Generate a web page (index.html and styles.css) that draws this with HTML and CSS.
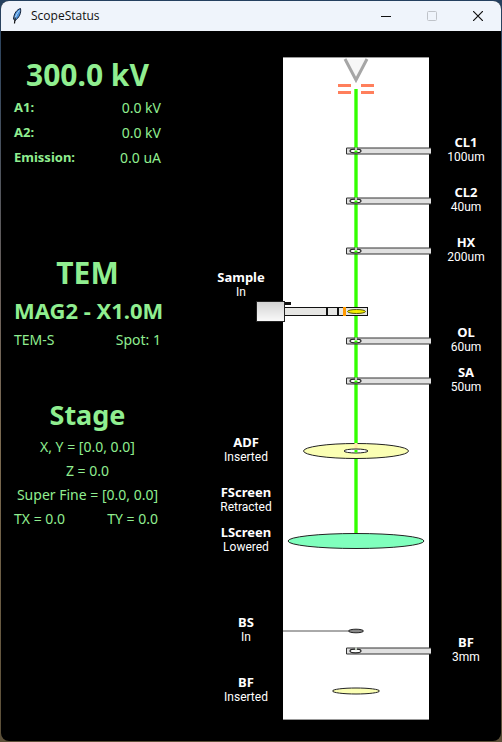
FILE: index.html
```html
<!DOCTYPE html>
<html lang="en">
<head>
<meta charset="utf-8">
<title>ScopeStatus</title>
<link rel="stylesheet" href="styles.css">
</head>
<body>
<div class="window">
  <header class="titlebar">
    <svg class="app-icon" width="10" height="16" viewBox="0 0 10 16" aria-hidden="true">
      <path d="M8.500 .5C5 1.500 2 5 1.500 11L3 12.500C7 10 9.500 5 8.500 .5Z" fill="#4a90d9" stroke="#16233a"/>
      <path d="M7.500 2.500C5 5 3.500 8.500 2.700 11.500" fill="none" stroke="#b9dcfa"/>
      <path d="M3.200 9.500L2.500 15.500" stroke="#111" stroke-width="1.200"/>
    </svg>
    <h1 class="app-name">ScopeStatus</h1>
    <div class="controls">
      <button class="control" type="button" aria-label="Minimize"><svg width="10" height="10" viewBox="0 0 10 10"><path d="M0 5.500H10" stroke="#111"/></svg></button>
      <button class="control" type="button" aria-label="Maximize" disabled><svg width="10" height="10" viewBox="0 0 10 10"><rect x=".5" y=".5" width="9" height="9" rx="1" fill="none" stroke="#bfc3c9"/></svg></button>
      <button class="control" type="button" aria-label="Close"><svg width="10" height="10" viewBox="0 0 10 10"><path d="M0 0L10 10M10 0L0 10" stroke="#111" stroke-width="1.200"/></svg></button>
    </div>
  </header>
  <main class="content">
    <div class="readings">
      <section class="group">
        <h2 class="headline">300.0 kV</h2>
        <dl class="values">
          <div class="value-row"><dt>A1:</dt><dd>0.0 kV</dd></div>
          <div class="value-row"><dt>A2:</dt><dd>0.0 kV</dd></div>
          <div class="value-row"><dt>Emission:</dt><dd>0.0 uA</dd></div>
        </dl>
      </section>
      <section class="group group-mode">
        <h2 class="headline">TEM</h2>
        <p class="magnification">MAG2 - X1.0M</p>
        <div class="pair"><span>TEM-S</span><span>Spot: 1</span></div>
      </section>
      <section class="group group-stage">
        <h2 class="headline headline-stage">Stage</h2>
        <p class="line">X, Y = [0.0, 0.0]</p>
        <p class="line">Z = 0.0</p>
        <p class="line">Super Fine = [0.0, 0.0]</p>
        <div class="line pair pair-tilt"><span>TX = 0.0</span><span>TY = 0.0</span></div>
      </section>
    </div>
    <ul class="labels labels-left">
      <li class="label label-sample"><b>Sample</b><span>In</span></li>
      <li class="label label-adf"><b>ADF</b><span>Inserted</span></li>
      <li class="label gap-20"><b>FScreen</b><span>Retracted</span></li>
      <li class="label gap-10"><b>LScreen</b><span>Lowered</span></li>
      <li class="label gap-60"><b>BS</b><span>In</span></li>
      <li class="label gap-30"><b>BF</b><span>Inserted</span></li>
    </ul>
    <svg class="column" width="148" height="663" viewBox="283 57 148 663" role="img" aria-label="Microscope column">
      <defs>
        <linearGradient id="holder" x1="0" y1="0" x2="0" y2="1"><stop offset="0" stop-color="#d2d2d2"/><stop offset="1" stop-color="#fafafa"/></linearGradient>
        <g id="aperture">
          <path d="M431 -3H346.500V3H431" fill="#e0e0e0" stroke="#333"/>
          <ellipse cx="355.500" cy="0" rx="5.500" ry="1.800" fill="#fff" stroke="#222" stroke-width="1.200"/>
          <path d="M356 -3.500V-.5" stroke="#e6f5e0" stroke-width="1.500"/>
        </g>
      </defs>
      <rect x="283" y="57" width="146" height="663" fill="#fff"/>
      <path d="M283 57.500H429M283 719.500H429" stroke="#999"/>
      <path d="M345 59L356 80L367 59" fill="#f7f7f7" stroke="#a6a6a6" stroke-width="3"/>
      <path d="M338 85.500H351M361 85.500H374M338 92.500H351M361 92.500H374" stroke="#ff7f5c" stroke-width="3"/>
      <path d="M356 89V534" stroke="#b4ff9c" stroke-width="4"/>
      <path d="M356 89V534" stroke="#3f0" stroke-width="3"/>
      <use href="#aperture" y="151"/><use href="#aperture" y="201"/><use href="#aperture" y="251"/>
      <use href="#aperture" y="341"/><use href="#aperture" y="381"/><use href="#aperture" y="651"/>
      <path d="M356 150.500V152.500M356 200.500V202.500M356 250.500V252.500M356 340.500V342.500M356 380.500V382.500" stroke="#3f0" stroke-width="3"/>
      <rect x="284.500" y="307.500" width="83" height="8" fill="#e6e6e4" stroke="#111"/>
      <path d="M327 307V316M338 307V316" stroke="#111" stroke-width="2"/>
      <path d="M344.500 307V316" stroke="#ff9900" stroke-width="3"/>
      <ellipse cx="356.500" cy="311.500" rx="9" ry="2" fill="#f4ee00" stroke="#55550a"/>
      <path d="M284 303.500H291" stroke="#111" stroke-width="3"/>
      <rect x="256.500" y="301.500" width="28" height="20" fill="url(#holder)" stroke="#222"/>
      <ellipse cx="356" cy="451" rx="52.500" ry="7.500" fill="#fbffb4" stroke="#222"/>
      <path d="M356 443V449" stroke="#ffe9a8" stroke-width="3"/>
      <ellipse cx="356" cy="451" rx="12" ry="2" fill="#fff" stroke="#222"/>
      <path d="M356 450V452.500" stroke="#3f0" stroke-width="3"/>
      <ellipse cx="356" cy="541" rx="68" ry="7.500" fill="#80ffbd" stroke="#222"/>
      <path d="M283 631H349" stroke="#555"/>
      <ellipse cx="356" cy="631" rx="7.500" ry="1.800" fill="#888" stroke="#222"/>
      <ellipse cx="356" cy="691" rx="23.500" ry="3" fill="#fbffb4" stroke="#222"/>
    </svg>
    <ul class="labels labels-right">
      <li class="label"><b>CL1</b><span>100um</span></li>
      <li class="label gap-20"><b>CL2</b><span>40um</span></li>
      <li class="label gap-20"><b>HX</b><span>200um</span></li>
      <li class="label gap-60"><b>OL</b><span>60um</span></li>
      <li class="label gap-10"><b>SA</b><span>50um</span></li>
      <li class="label label-bf"><b>BF</b><span>3mm</span></li>
    </ul>
  </main>
</div>
</body>
</html>
```
FILE: styles.css
```css
* {
  box-sizing: border-box;
  margin: 0;
  padding: 0;
}

body {
  display: flex;
  min-height: 100vh;
  padding: 1px;
  background: linear-gradient(#24405f, #6d625c 40%, #7b6a50 60%, #5b4f38);
  font-family: "Comic Sans MS", "Noto Sans", sans-serif;
  font-size: 14px;
}

.window {
  flex: 1;
  border-radius: 8px;
  overflow: hidden;
  background: #000;
}

.titlebar {
  display: flex;
  align-items: center;
  height: 30px;
  padding-left: 11px;
  background: #eff4fb;
  color: #111;
}

.app-name {
  flex: 1;
  margin-left: 9px;
  font: 12px/16px "Segoe UI", "Open Sans", sans-serif;
}

.controls {
  display: flex;
}

.control {
  display: flex;
  align-items: center;
  justify-content: center;
  width: 46px;
  height: 30px;
  border: 0;
  background: none;
}

.content {
  display: grid;
  grid-template-columns: 147px 1fr 148px 70px;
  padding: 26px 0 20px 13px;
}

.readings {
  color: #90ee90;
}

.group-mode {
  margin-top: 85px;
}

.group-stage {
  margin-top: 46px;
}

.headline {
  font-size: 30px;
  line-height: 36px;
  text-align: center;
  white-space: nowrap;
}

.headline-stage {
  margin-bottom: 2px;
  font-size: 27px;
}

.values {
  padding-top: 2px;
}

.value-row,
.pair {
  display: flex;
  justify-content: space-between;
}

.value-row {
  line-height: 25px;
}

.value-row dt {
  font-size: 13px;
  font-weight: bold;
}

.magnification {
  font-size: 22px;
  font-weight: bold;
  line-height: 38px;
  text-align: center;
  white-space: nowrap;
}

.pair {
  line-height: 22px;
}

.line {
  line-height: 24px;
  text-align: center;
  white-space: nowrap;
}

.pair-tilt {
  padding-right: 3px;
}

.column {
  overflow: visible;
}

.labels {
  list-style: none;
  color: #fff;
  text-align: center;
}

.labels-left {
  padding: 213px 0 0 48px;
}

.labels-right {
  padding-top: 78px;
}

.label {
  line-height: 15px;
}

.label b {
  display: block;
  font-size: 13px;
}

.label span {
  display: block;
  font-family: Tahoma, Roboto, sans-serif;
  font-size: 12px;
}

.label-sample {
  padding-right: 10px;
}

.label-adf {
  margin-top: 135px;
}

.label-bf {
  margin-top: 240px;
}

.gap-10 {
  margin-top: 10px;
}

.gap-20 {
  margin-top: 20px;
}

.gap-30 {
  margin-top: 30px;
}

.gap-60 {
  margin-top: 60px;
}
```
